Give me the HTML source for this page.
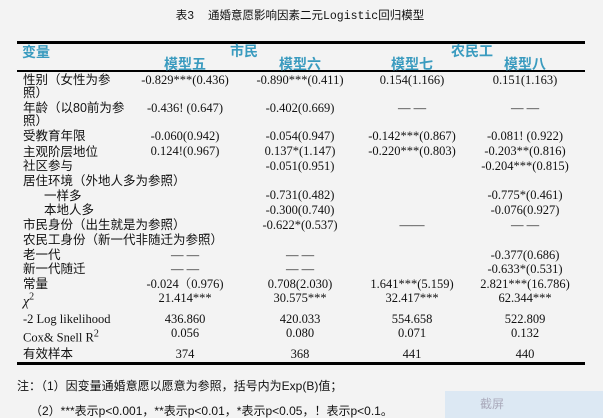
<!DOCTYPE html>
<html><head><meta charset="utf-8"><style>
body{margin:0;width:603px;height:418px;background:#f3f3f3;position:relative;overflow:hidden;font-family:"Liberation Serif","Noto Serif CJK SC",serif;color:#111}
div.t{position:absolute;white-space:nowrap;line-height:14px;transform:translateY(-50%)}
.l{left:23px;font-family:"Liberation Sans","Noto Sans CJK SC",sans-serif;font-size:12.5px}
.n{font-size:12.5px;transform:translate(-50%,-50%)!important}
.h{color:#3a9bbf;font-weight:bold;font-family:"Liberation Sans","Noto Sans CJK SC",sans-serif;font-size:14px;transform:translate(-50%,-50%)!important}
.line{position:absolute;left:17px;width:568px;background:#000}
</style></head><body>
<div class="t" style="left:300px;top:17px;transform:translate(-50%,-50%);font-family:'Liberation Mono','Noto Sans CJK SC',sans-serif;font-size:11.5px">表3&nbsp; 通婚意愿影响因素二元Logistic回归模型</div>
<div class="line" style="top:41px;height:3px"></div>
<div class="line" style="top:70px;height:2px"></div>
<div class="line" style="top:362px;height:3px"></div>
<div class="t h" style="left:36px;top:52px">变量</div>
<div class="t h" style="left:244px;top:51px">市民</div>
<div class="t h" style="left:472px;top:51px">农民工</div>
<div class="t h" style="left:185px;top:64px">模型五</div>
<div class="t h" style="left:300px;top:64px">模型六</div>
<div class="t h" style="left:412px;top:64px">模型七</div>
<div class="t h" style="left:525px;top:64px">模型八</div>

<div class="t l" style="top:80px">性别（女性为参</div><div class="t l" style="top:93px">照）</div>
<div class="t n" style="left:185px;top:80px">-0.829***(0.436)</div><div class="t n" style="left:300px;top:80px">-0.890***(0.411)</div><div class="t n" style="left:412px;top:80px">0.154(1.166)</div><div class="t n" style="left:525px;top:80px">0.151(1.163)</div>
<div class="t l" style="top:108px">年龄（以80前为参</div><div class="t l" style="top:121px">照）</div>
<div class="t n" style="left:185px;top:108px">-0.436!&nbsp;(0.647)</div><div class="t n" style="left:300px;top:108px">-0.402(0.669)</div><div class="t n" style="left:412px;top:108px">— —</div><div class="t n" style="left:525px;top:108px">— —</div>
<div class="t l" style="top:136px">受教育年限</div>
<div class="t n" style="left:185px;top:136px">-0.060(0.942)</div><div class="t n" style="left:300px;top:136px">-0.054(0.947)</div><div class="t n" style="left:412px;top:136px">-0.142***(0.867)</div><div class="t n" style="left:525px;top:136px">-0.081!&nbsp;(0.922)</div>
<div class="t l" style="top:152px">主观阶层地位</div>
<div class="t n" style="left:185px;top:151px">0.124!(0.967)</div><div class="t n" style="left:300px;top:151px">0.137*(1.147)</div><div class="t n" style="left:412px;top:151px">-0.220***(0.803)</div><div class="t n" style="left:525px;top:151px">-0.203**(0.816)</div>
<div class="t l" style="top:166px">社区参与</div>
<div class="t n" style="left:300px;top:166px">-0.051(0.951)</div><div class="t n" style="left:525px;top:166px">-0.204***(0.815)</div>
<div class="t l" style="top:181px">居住环境（外地人多为参照）</div>
<div class="t l" style="top:196px;left:44px">一样多</div>
<div class="t n" style="left:300px;top:195px">-0.731(0.482)</div><div class="t n" style="left:525px;top:195px">-0.775*(0.461)</div>
<div class="t l" style="top:210px;left:44px">本地人多</div>
<div class="t n" style="left:300px;top:210px">-0.300(0.740)</div><div class="t n" style="left:525px;top:210px">-0.076(0.927)</div>
<div class="t l" style="top:225px">市民身份（出生就是为参照）</div>
<div class="t n" style="left:300px;top:225px">-0.622*(0.537)</div><div class="t n" style="left:412px;top:225px">——</div><div class="t n" style="left:525px;top:225px">— —</div>
<div class="t l" style="top:240px">农民工身份（新一代非随迁为参照）</div>
<div class="t l" style="top:255px">老一代</div>
<div class="t n" style="left:185px;top:255px">— —</div><div class="t n" style="left:300px;top:255px">— —</div><div class="t n" style="left:525px;top:255px">-0.377(0.686)</div>
<div class="t l" style="top:269px">新一代随迁</div>
<div class="t n" style="left:185px;top:269px">— —</div><div class="t n" style="left:300px;top:269px">— —</div><div class="t n" style="left:525px;top:269px">-0.633*(0.531)</div>
<div class="t l" style="top:284px">常量</div>
<div class="t n" style="left:185px;top:284px">-0.024（0.976)</div><div class="t n" style="left:300px;top:284px">0.708(2.030)</div><div class="t n" style="left:412px;top:284px">1.641***(5.159)</div><div class="t n" style="left:525px;top:284px">2.821***(16.786)</div>
<div class="t" style="left:23px;top:300px;font-size:14px;font-style:italic">χ<sup style="font-size:10px;font-style:normal">2</sup></div>
<div class="t n" style="left:185px;top:298px">21.414***</div><div class="t n" style="left:300px;top:298px">30.575***</div><div class="t n" style="left:412px;top:298px">32.417***</div><div class="t n" style="left:525px;top:298px">62.344***</div>
<div class="t" style="left:23px;top:319px;font-size:12.5px">-2 Log likelihood</div>
<div class="t n" style="left:185px;top:319px">436.860</div><div class="t n" style="left:300px;top:319px">420.033</div><div class="t n" style="left:412px;top:319px">554.658</div><div class="t n" style="left:525px;top:319px">522.809</div>
<div class="t" style="left:23px;top:336px;font-size:12.5px">Cox&amp; Snell R<sup style="font-size:10px">2</sup></div>
<div class="t n" style="left:185px;top:333px">0.056</div><div class="t n" style="left:300px;top:333px">0.080</div><div class="t n" style="left:412px;top:333px">0.071</div><div class="t n" style="left:525px;top:333px">0.132</div>
<div class="t l" style="top:354px">有效样本</div>
<div class="t n" style="left:185px;top:354px">374</div><div class="t n" style="left:300px;top:354px">368</div><div class="t n" style="left:412px;top:354px">441</div><div class="t n" style="left:525px;top:354px">440</div>
<div class="t" style="left:17px;top:386px;font-size:12px;font-family:'Liberation Sans','Noto Sans CJK SC',sans-serif">注：（1）因变量通婚意愿以愿意为参照，括号内为Exp(B)值；</div>
<div style="position:absolute;left:445px;top:391px;width:158px;height:27px;background:#dce8f3"></div>
<div class="t" style="left:480px;top:404px;font-size:12px;color:#aab;font-family:'Liberation Sans','Noto Sans CJK SC',sans-serif">截屏</div>
<div class="t" style="left:30px;top:411px;font-size:12px;font-family:'Liberation Sans','Noto Sans CJK SC',sans-serif">（2）***表示p&lt;0.001，**表示p&lt;0.01，*表示p&lt;0.05，！表示p&lt;0.1。</div>
</body></html>
